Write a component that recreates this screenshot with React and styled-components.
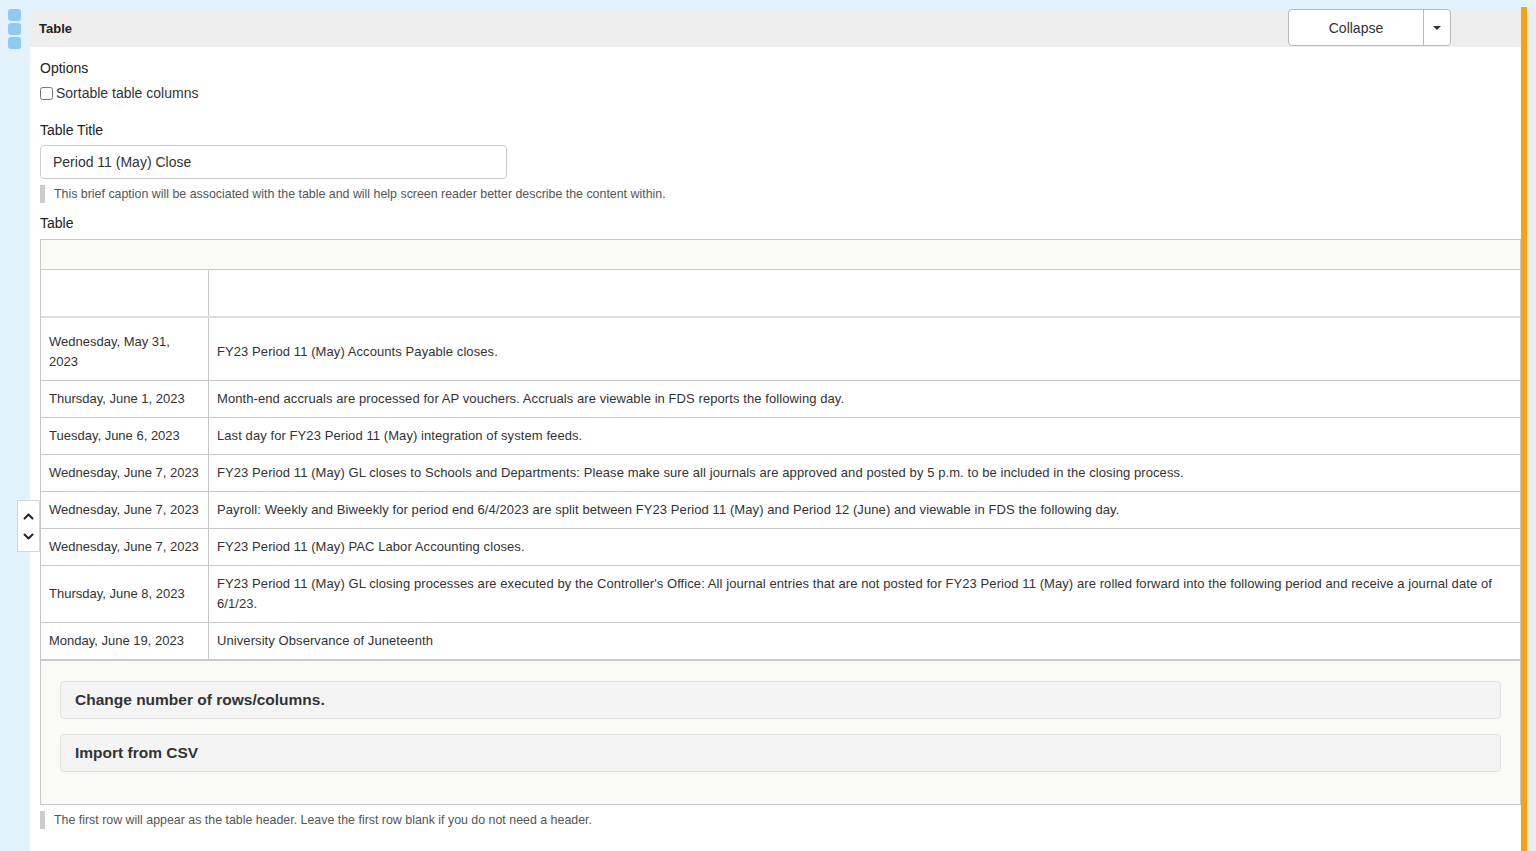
import React from 'react'
import styled, { createGlobalStyle } from 'styled-components'

const GlobalStyle = createGlobalStyle`
  html, body {
    margin: 0;
    padding: 0;
    background: #e2f3fd;
    font-family: "Liberation Sans", Arial, sans-serif;
    color: #333;
  }
`;

const Page = styled.div`
  position: relative;
  display: grid;
  grid-template-columns: 30px 1fr 6px 9px;
  min-height: 851px;
  background: #e2f3fd;
`;

const Rail = styled.div`
  display: flex;
  flex-direction: column;
  gap: 2px;
  padding: 9px 0 0 8px;
`;

const Handle = styled.span`
  width: 13px;
  height: 12px;
  border-radius: 3px;
  background: #90c9f6;
`;

const Panel = styled.div`
  margin-top: 9px;
  background: #fff;
  min-height: 842px;
`;

const Accent = styled.div`
  margin-top: 7px;
  background: #f7a20f;
`;

const Gutter = styled.div`
  margin-top: 7px;
  background: #ececec;
`;

const HeaderBar = styled.div`
  height: 38px;
  display: flex;
  align-items: center;
  justify-content: space-between;
  padding: 0 70px 0 9px;
  background: #eeeeee;
`;

const HeaderTitle = styled.span`
  font-size: 13px;
  font-weight: 600;
  color: #222;
`;

const SplitButton = styled.div`
  display: flex;
  height: 37px;
  align-self: flex-start;
  border: 1px solid #b9b9b9;
  border-radius: 4px;
  background: #fff;
  box-sizing: border-box;
`;

const MainBtn = styled.button`
  width: 135px;
  border: none;
  border-right: 1px solid #b9b9b9;
  background: transparent;
  font: 14px "Liberation Sans", Arial, sans-serif;
  color: #333;
`;

const CaretBtn = styled.button`
  width: 26px;
  border: none;
  background: transparent;
  display: flex;
  align-items: center;
  justify-content: center;
  &::after {
    content: "";
    border-left: 4px solid transparent;
    border-right: 4px solid transparent;
    border-top: 4px solid #333;
  }
`;

const Body = styled.div`
  padding: 12px 0 20px 10px;
`;

const Label = styled.div`
  font-size: 14px;
  line-height: 18px;
  color: #222;
  margin: ${({ $m }) => $m || '0'};
`;

const CheckRow = styled.label`
  display: flex;
  align-items: center;
  gap: 3px;
  font-size: 14px;
  line-height: 18px;
  margin-top: 7px;
  input {
    margin: 0;
    width: 13px;
    height: 13px;
  }
`;

const TextInput = styled.input`
  display: block;
  box-sizing: border-box;
  width: 467px;
  height: 34px;
  margin-top: 6px;
  padding: 0 12px;
  border: 1px solid #ccc;
  border-radius: 4px;
  font: 14px "Liberation Sans", Arial, sans-serif;
  color: #333;
`;

const Help = styled.div`
  margin: ${({ $m }) => $m || '6px 0 0'};
  border-left: 5px solid #ccc;
  padding: 0 0 0 9px;
  font-size: 12.4px;
  line-height: 18px;
  color: #555;
`;

const TableBox = styled.div`
  margin-top: 7px;
  border: 1px solid #c8c8c8;
  background: #fafaf7;
`;

const Caption = styled.div`
  height: 29px;
  background: #fbfbf6;
  border-bottom: 1px solid #c8c8c8;
`;

const Grid = styled.table`
  width: 100%;
  border-collapse: collapse;
  background: #fff;
  font-size: 13px;
  line-height: 20px;
  thead td {
    height: 46px;
    padding: 0;
    border-bottom: 2px solid #dcdcdc;
  }
  td {
    border: 1px solid #c8c8c8;
    border-top: none;
    padding: 8px 8px 8px 8px;
    vertical-align: middle;
    color: #333;
  }
  td:first-child {
    border-left: none;
    width: 151px;
  }
  td:last-child {
    border-right: none;
    letter-spacing: 0.08px;
  }
`;

const FirstRow = styled.tr`
  td {
    padding-top: 14px;
    padding-bottom: 8px;
  }
`;

const Extras = styled.div`
  display: flex;
  flex-direction: column;
  gap: 15px;
  padding: 20px 19px 32px 19px;
  border-top: 1px solid #c8c8c8;
`;

const Accordion = styled.div`
  height: 38px;
  box-sizing: border-box;
  display: flex;
  align-items: center;
  padding: 0 14px;
  background: #f4f4f4;
  border: 1px solid #e2e2e2;
  border-radius: 4px;
  font-size: 15.5px;
  font-weight: 700;
  color: #333;
`;

const Mover = styled.div`
  position: absolute;
  left: 17px;
  top: 500px;
  width: 23px;
  height: 52px;
  box-sizing: border-box;
  background: #fff;
  border: 1px solid #d6d6d6;
  display: flex;
  flex-direction: column;
  align-items: center;
  justify-content: center;
  gap: 13px;
`;

const rows = [
  ['Wednesday, May 31, 2023', 'FY23 Period 11 (May) Accounts Payable closes.'],
  ['Thursday, June 1, 2023', 'Month-end accruals are processed for AP vouchers. Accruals are viewable in FDS reports the following day.'],
  ['Tuesday, June 6, 2023', 'Last day for FY23 Period 11 (May) integration of system feeds.'],
  ['Wednesday, June 7, 2023', 'FY23 Period 11 (May) GL closes to Schools and Departments: Please make sure all journals are approved and posted by 5 p.m. to be included in the closing process.'],
  ['Wednesday, June 7, 2023', 'Payroll: Weekly and Biweekly for period end 6/4/2023 are split between FY23 Period 11 (May) and Period 12 (June) and viewable in FDS the following day.'],
  ['Wednesday, June 7, 2023', 'FY23 Period 11 (May) PAC Labor Accounting closes.'],
  ['Thursday, June 8, 2023', "FY23 Period 11 (May) GL closing processes are executed by the Controller's Office: All journal entries that are not posted for FY23 Period 11 (May) are rolled forward into the following period and receive a journal date of 6/1/23."],
  ['Monday, June 19, 2023', 'University Observance of Juneteenth'],
]

const Chevron = ({ up }) => (
  <svg width="11" height="7" viewBox="0 0 11 7" fill="none" stroke="#222" strokeWidth="2" strokeLinecap="round" strokeLinejoin="round">
    {up ? <path d="M1.5 5.5 5.5 1.5 9.5 5.5" /> : <path d="M1.5 1.5 5.5 5.5 9.5 1.5" />}
  </svg>
)

const App = () => {
  return (
    <>
      <GlobalStyle />
      <Page>
        <Rail>
          <Handle />
          <Handle />
          <Handle />
        </Rail>
        <Panel>
          <HeaderBar>
            <HeaderTitle>Table</HeaderTitle>
            <SplitButton>
              <MainBtn>Collapse</MainBtn>
              <CaretBtn aria-label="More" />
            </SplitButton>
          </HeaderBar>
          <Body>
            <Label>Options</Label>
            <CheckRow>
              <input type="checkbox" />
              Sortable table columns
            </CheckRow>
            <Label $m="19px 0 0">Table Title</Label>
            <TextInput defaultValue="Period 11 (May) Close" />
            <Help>This brief caption will be associated with the table and will help screen reader better describe the content within.</Help>
            <Label $m="11px 0 0">Table</Label>
            <TableBox>
              <Caption />
              <Grid>
                <thead>
                  <tr>
                    <td></td>
                    <td></td>
                  </tr>
                </thead>
                <tbody>
                  {rows.map(([date, text], i) => {
                    const Row = i === 0 ? FirstRow : 'tr'
                    return (
                      <Row key={i}>
                        <td>{date}</td>
                        <td>{text}</td>
                      </Row>
                    )
                  })}
                </tbody>
              </Grid>
              <Extras>
                <Accordion>Change number of rows/columns.</Accordion>
                <Accordion>Import from CSV</Accordion>
              </Extras>
            </TableBox>
            <Help $m="6px 0 0">The first row will appear as the table header. Leave the first row blank if you do not need a header.</Help>
          </Body>
        </Panel>
        <Accent />
        <Gutter />
        <Mover>
          <Chevron up />
          <Chevron />
        </Mover>
      </Page>
    </>
  )
}

export default App
